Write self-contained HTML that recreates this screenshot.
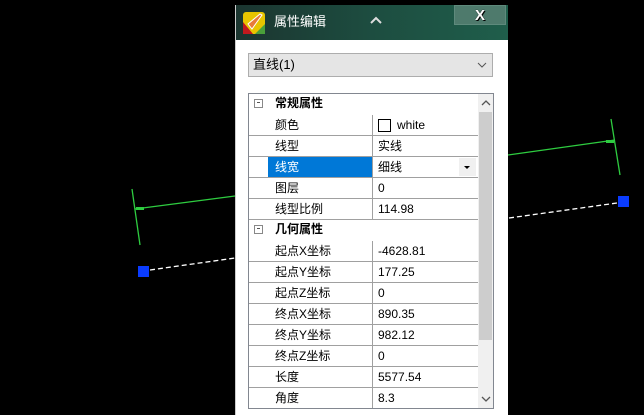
<!DOCTYPE html>
<html><head><meta charset="utf-8"><style>
body{margin:0;width:644px;height:415px;background:#000;position:relative;overflow:hidden;font-family:"Liberation Sans","Noto Sans CJK SC",sans-serif;font-size:12px;line-height:14px;color:#000}
.p{position:absolute}
#panel{left:235px;top:5px;width:272px;height:410px;background:#fff;border-left:1px solid #ccc}
#title{left:0;top:0;width:272px;height:35px;background:linear-gradient(90deg,#1b3530,#1d4d40 50%,#1f5e4b)}
#grid{left:12px;top:88px;width:244px;height:314px;border:1px solid #828790;overflow:hidden}
.row{position:absolute;left:0;height:20px;width:229px;border-bottom:1px solid #a0a0a0}
.n{position:absolute;left:26px;top:3px}
.v{position:absolute;left:123px;top:0;width:105px;height:20px;border-left:1px solid #a0a0a0}
.v span{position:absolute;left:5px;top:3px}
.sec{font-weight:bold;border-bottom:none}
</style></head><body>
<svg class="p" style="left:0;top:0" width="644" height="415">
<g stroke="#2ecc40" stroke-width="1.3" fill="none">
<line x1="132" y1="189" x2="140" y2="245"/><line x1="135" y1="209" x2="235" y2="196"/>
<line x1="611" y1="119" x2="620" y2="175"/><line x1="508" y1="155" x2="615" y2="140"/>
</g>
<rect x="136" y="207" width="8" height="3" fill="#2ecc40"/><rect x="606" y="140" width="8" height="3" fill="#2ecc40"/>
<g stroke="#fff" stroke-width="1.3" stroke-dasharray="5,3"><line x1="150" y1="270" x2="235" y2="258"/><line x1="509" y1="218" x2="617" y2="203"/></g>
<rect x="138" y="266" width="11" height="11" fill="#0a3cff"/><rect x="618" y="196" width="11" height="11" fill="#0a3cff"/>
</svg>
<div id="panel" class="p">
<div id="title" class="p">
<svg class="p" style="left:7px;top:7px" width="22" height="22"><rect width="22" height="22" rx="3" fill="#e8c400"/><path d="M0 10 L10 22 L0 22Z" fill="#c0191e"/><path d="M12 22 L22 12 L22 22Z" fill="#4aa03a"/><path d="M5 12 L9 17 L19 3 L17 2Z" fill="#e87a3a" stroke="#fff" stroke-width="1"/></svg>
<div class="p" style="left:38px;top:9px;color:#fff;font-size:13px;line-height:15px">属性编辑</div>
<svg class="p" style="left:133px;top:10px" width="14" height="10"><path d="M2 8 L7 3 L12 8" stroke="#ddd" stroke-width="2" fill="none"/></svg>
<div class="p" style="left:218px;top:0;width:52px;height:20px;background:#4e7a6c;border:1px solid #5e8a7c;box-sizing:border-box;color:#fff;font-weight:bold;font-size:15px;text-align:center;line-height:19px;text-shadow:0 0 1px #000,1px 1px 0 #000">X</div>
</div>
<div class="p" style="left:12px;top:48px;width:245px;height:24px;background:#e5e5e5;border:1px solid #adadad;box-sizing:border-box"><span class="p" style="left:4px;top:4px;font-size:13px;line-height:14px">直线(1)</span><svg class="p" style="left:228px;top:8px" width="10" height="6"><path d="M1 1 L5 5 L9 1" stroke="#555" fill="none"/></svg></div>
<div id="grid" class="p">
<div class="row sec" style="top:0"><span class="p" style="left:5px;top:5px;width:7px;height:7px;border:1px solid #888"></span><span class="p" style="left:8px;top:8px;width:3px;height:1px;background:#555"></span><span class="n" style="top:2px">常规属性</span></div>
<div class="row" style="top:21px"><span class="n">颜色</span><div class="v"><span style="left:5px;top:4px;width:11px;height:11px;border:1px solid #000"></span><span style="left:24px">white</span></div></div>
<div class="row" style="top:42px"><span class="n">线型</span><div class="v"><span>实线</span></div></div>
<div class="row" style="top:63px"><div class="p" style="left:19px;top:0;width:104px;height:20px;background:#0078d7"></div><span class="n" style="color:#fff">线宽</span><div class="v"><span>细线</span><div class="p" style="left:86px;top:1px;width:17px;height:18px;background:#f0f0f0"></div><svg class="p" style="left:91px;top:9px" width="6" height="4"><path d="M0 0H6L3 3Z" fill="#000"/></svg></div></div>
<div class="row" style="top:84px"><span class="n">图层</span><div class="v"><span>0</span></div></div>
<div class="row" style="top:105px"><span class="n">线型比例</span><div class="v"><span>114.98</span></div></div>
<div class="row sec" style="top:126px"><span class="p" style="left:5px;top:5px;width:7px;height:7px;border:1px solid #888"></span><span class="p" style="left:8px;top:8px;width:3px;height:1px;background:#555"></span><span class="n" style="top:2px">几何属性</span></div>
<div class="row" style="top:147px"><span class="n">起点X坐标</span><div class="v"><span>-4628.81</span></div></div>
<div class="row" style="top:168px"><span class="n">起点Y坐标</span><div class="v"><span>177.25</span></div></div>
<div class="row" style="top:189px"><span class="n">起点Z坐标</span><div class="v"><span>0</span></div></div>
<div class="row" style="top:210px"><span class="n">终点X坐标</span><div class="v"><span>890.35</span></div></div>
<div class="row" style="top:231px"><span class="n">终点Y坐标</span><div class="v"><span>982.12</span></div></div>
<div class="row" style="top:252px"><span class="n">终点Z坐标</span><div class="v"><span>0</span></div></div>
<div class="row" style="top:273px"><span class="n">长度</span><div class="v"><span>5577.54</span></div></div>
<div class="row" style="top:294px"><span class="n">角度</span><div class="v"><span>8.3</span></div></div>
<div class="p" style="left:229px;top:0;width:15px;height:314px;background:#f0f0f0"></div>
<div class="p" style="left:230px;top:18px;width:13px;height:228px;background:#cdcdcd"></div>
<svg class="p" style="left:232px;top:6px" width="10" height="6"><path d="M1 5 L5 1 L9 5" stroke="#555" stroke-width="1.3" fill="none"/></svg>
<svg class="p" style="left:232px;top:302px" width="10" height="6"><path d="M1 1 L5 5 L9 1" stroke="#555" stroke-width="1.3" fill="none"/></svg>
</div>
</div>
</body></html>
